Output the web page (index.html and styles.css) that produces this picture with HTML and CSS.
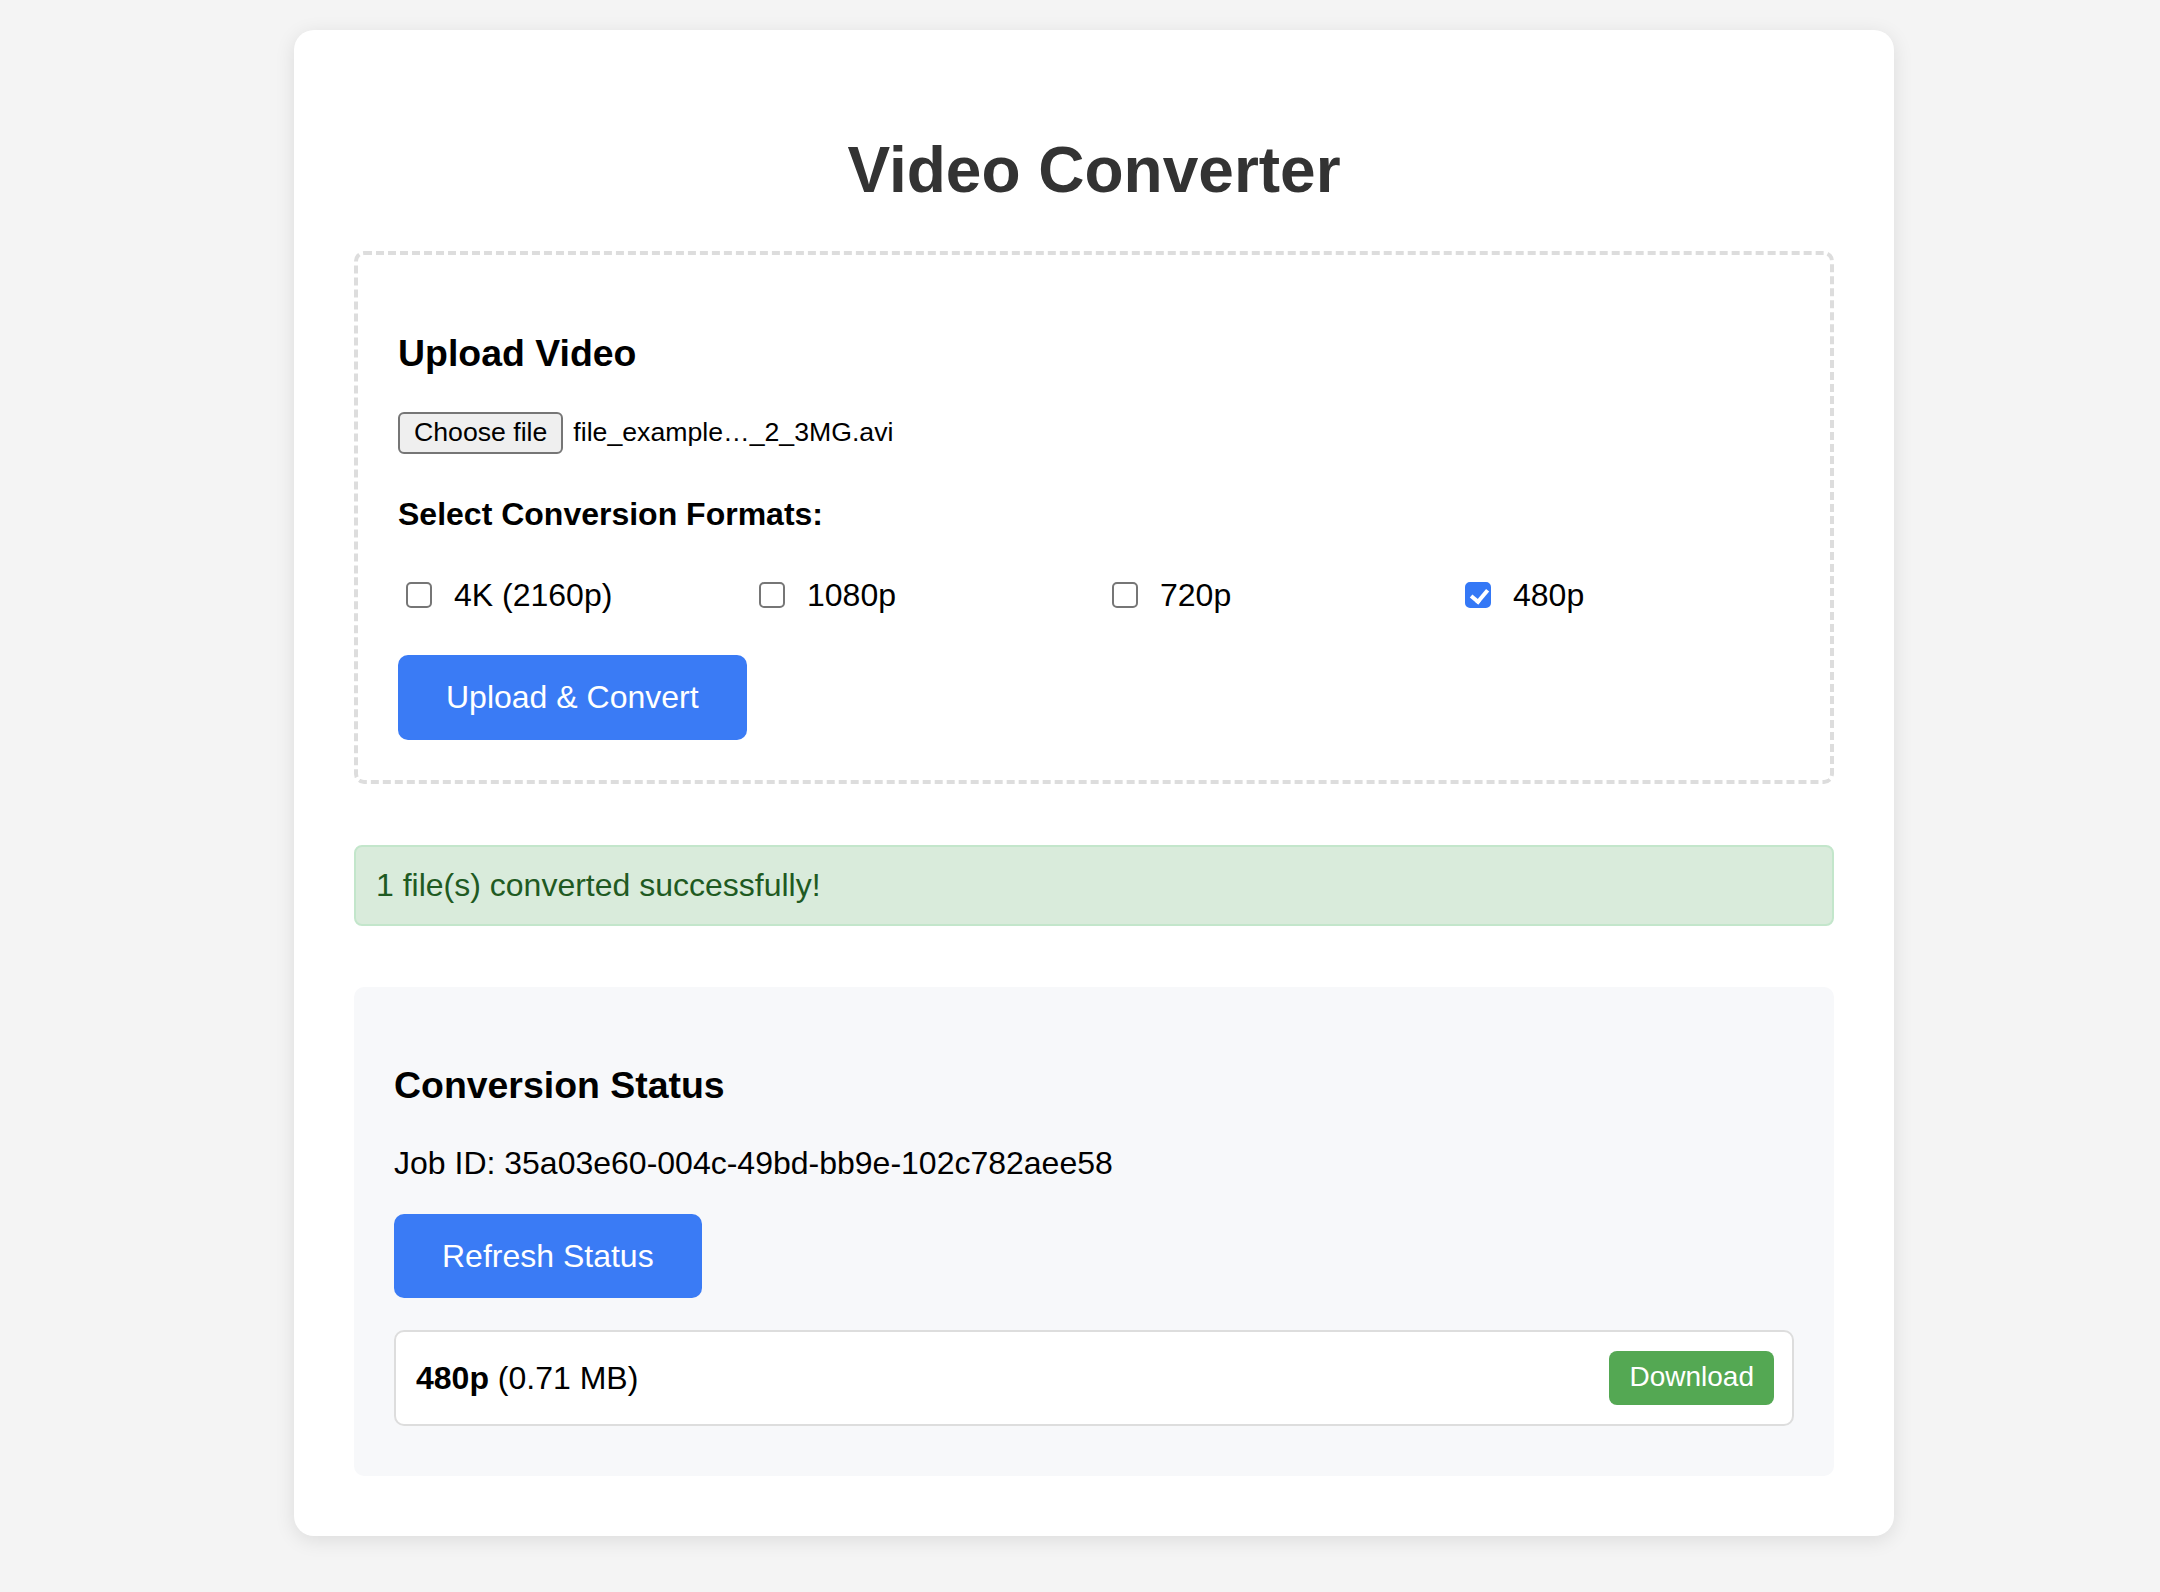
FILE: index.html
```html
<!DOCTYPE html>
<html lang="en">
<head>
<meta charset="utf-8">
<title>Video Converter</title>
<link rel="stylesheet" href="styles.css">
</head>
<body>
<div class="container">
  <h1 class="title">Video Converter</h1>

  <div class="upload-box">
    <h3 class="section-title">Upload Video</h3>
    <div class="file-row">
      <button class="file-btn" type="button">Choose file</button>
      <span class="file-name">file_example…_2_3MG.avi</span>
    </div>
    <label class="formats-label">Select Conversion Formats:</label>
    <div class="formats">
      <label class="format"><input type="checkbox" class="check"><span>4K (2160p)</span></label>
      <label class="format"><input type="checkbox" class="check"><span>1080p</span></label>
      <label class="format"><input type="checkbox" class="check"><span>720p</span></label>
      <label class="format"><input type="checkbox" class="check" checked><span>480p</span></label>
    </div>
    <button class="btn-primary" type="button">Upload &amp; Convert</button>
  </div>

  <div class="message">1 file(s) converted successfully!</div>

  <div class="status">
    <h3 class="section-title status-title">Conversion Status</h3>
    <p class="job">Job ID: 35a03e60-004c-49bd-bb9e-102c782aee58</p>
    <button class="btn-primary" type="button">Refresh Status</button>
    <div class="result">
      <span class="result-name"><strong>480p</strong> (0.71 MB)</span>
      <button class="btn-download" type="button">Download</button>
    </div>
  </div>
</div>
</body>
</html>
```

FILE: styles.css
```css
* {
  box-sizing: border-box;
}

html, body {
  margin: 0;
  padding: 0;
}

body {
  background: #f4f4f4;
  font-family: "Liberation Sans", Arial, Helvetica, sans-serif;
  font-size: 32px;
  color: #000;
  padding-top: 30px;
  padding-left: 28px;
  min-height: 1592px;
}

.container {
  width: 1600px;
  margin: 0 auto;
  background: #fff;
  padding: 60px;
  border-radius: 20px;
  box-shadow: 0 4px 20px rgba(0, 0, 0, 0.1);
}

.title {
  font-size: 64px;
  line-height: 1.149;
  margin: 44px 0 43px;
  color: #333;
  text-align: center;
  font-weight: bold;
}

.upload-box {
  border: 4px dashed #ddd;
  border-radius: 10px;
  padding: 40px;
}

.section-title {
  font-size: 37.44px;
  line-height: 1.149;
  margin: 37px 0;
  font-weight: bold;
}

.status-title {
  margin-top: 37px;
  margin-bottom: 38px;
}

.file-row {
  display: flex;
  align-items: center;
  margin-bottom: 42px;
}

.file-btn {
  height: 42px;
  padding: 0 14px;
  border: 2px solid #767676;
  border-radius: 6px;
  background: #efefef;
  font-family: "Liberation Sans", Arial, sans-serif;
  font-size: 26.67px;
  color: #000;
  line-height: 1;
}

.file-name {
  margin-left: 10px;
  font-size: 26.67px;
}

.formats-label {
  display: block;
  font-weight: bold;
  line-height: 1.149;
  margin-bottom: 44px;
}

.formats {
  display: grid;
  grid-template-columns: repeat(4, 1fr);
  gap: 20px;
  margin-bottom: 41px;
}

.format {
  display: flex;
  align-items: center;
  line-height: 1.149;
}

.check {
  appearance: none;
  -webkit-appearance: none;
  position: relative;
  width: 26px;
  height: 26px;
  margin: 6px 22px 6px 8px;
  border: 2px solid #767676;
  border-radius: 5px;
  background: #fff;
  flex: none;
}

.check:checked {
  background: #3478f6;
  border-color: #3478f6;
}

.check:checked::after {
  content: "";
  position: absolute;
  left: 7px;
  top: 2px;
  width: 7px;
  height: 13px;
  border-right: 4px solid #fff;
  border-bottom: 4px solid #fff;
  transform: rotate(40deg);
}

.btn-primary {
  display: inline-block;
  background: #3a7bf5;
  color: #fff;
  border: none;
  border-radius: 10px;
  padding: 24px 48px;
  font-family: "Liberation Sans", Arial, sans-serif;
  font-size: 32px;
  line-height: 1.149;
}

.message {
  margin-top: 61px;
  padding: 20px;
  border: 2px solid #c3e6cb;
  background: #d9ebdb;
  color: #1f5a22;
  border-radius: 8px;
  line-height: 1.149;
}

.status {
  margin-top: 61px;
  background: #f7f8fa;
  border-radius: 10px;
  padding: 40px;
}

.job {
  margin: 0 0 32px;
  line-height: 1.149;
}

.result {
  display: flex;
  justify-content: space-between;
  align-items: center;
  margin-top: 32px;
  margin-bottom: 10px;
  background: #fff;
  border: 2px solid #ddd;
  border-radius: 10px;
  padding: 19px 18px 19px 20px;
  line-height: 1.149;
}

.btn-download {
  background: #54a853;
  color: #fff;
  border: none;
  border-radius: 8px;
  padding: 10px 20px 11px;
  font-family: "Liberation Sans", Arial, sans-serif;
  font-size: 28px;
  line-height: 1.149;
}
```
